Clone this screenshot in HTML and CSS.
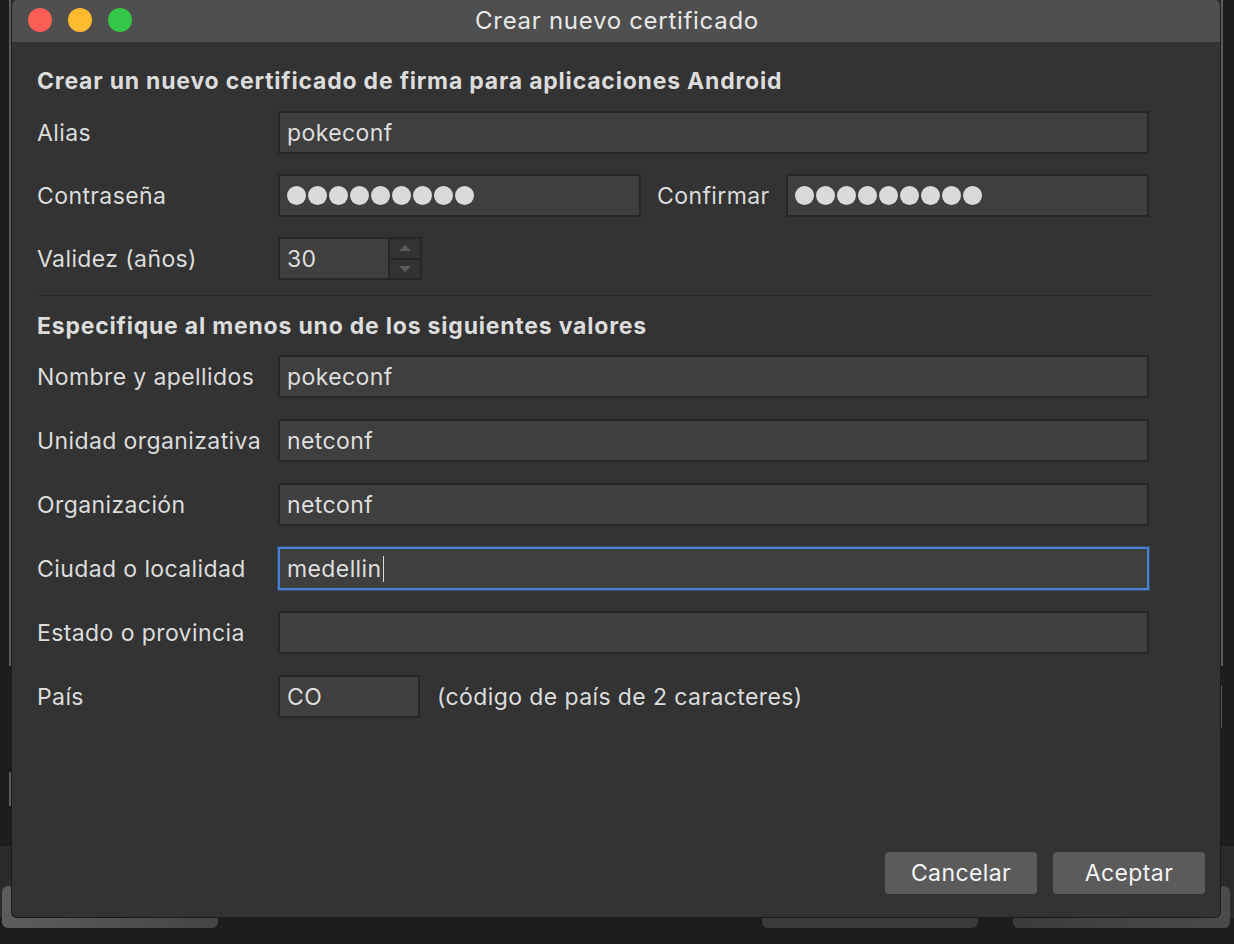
FILE: index.html
```html
<!DOCTYPE html>
<html lang="es">
<head>
<meta charset="utf-8">
<title>Crear nuevo certificado</title>
<link rel="stylesheet" href="styles.css">
</head>
<body>
<div class="desktop">
  <div class="bg-window"></div>
  <div class="bg-mark bg-mark-left"></div>
  <div class="bg-mark bg-mark-right"></div>
  <div class="bg-band"></div>
  <div class="bg-btn bg-btn-1"></div>
  <div class="bg-btn bg-btn-2"></div>
  <div class="bg-btn bg-btn-3"></div>

  <div class="dialog">
    <div class="titlebar">
      <div class="lights">
        <span class="light red"></span>
        <span class="light yellow"></span>
        <span class="light green"></span>
      </div>
      <div class="title">Crear nuevo certificado</div>
    </div>

    <div class="body">
      <h2 class="section">Crear un nuevo certificado de firma para aplicaciones Android</h2>
      <div class="form form-top">
        <div class="row">
          <label class="label">Alias</label>
          <div class="field">pokeconf</div>
        </div>
        <div class="row">
          <label class="label">Contraseña</label>
          <div class="pair">
            <div class="field dots"><span></span><span></span><span></span><span></span><span></span><span></span><span></span><span></span><span></span></div>
            <label class="label label-inline">Confirmar</label>
            <div class="field dots"><span></span><span></span><span></span><span></span><span></span><span></span><span></span><span></span><span></span></div>
          </div>
        </div>
        <div class="row">
          <label class="label">Validez (años)</label>
          <div class="spin">
            <div class="field spin-input">30</div>
            <div class="spin-buttons">
              <div class="spin-btn"><span class="arrow up"></span></div>
              <div class="spin-btn"><span class="arrow down"></span></div>
            </div>
          </div>
        </div>
      </div>

      <div class="separator"></div>

      <h2 class="section section-2">Especifique al menos uno de los siguientes valores</h2>
      <div class="form form-bottom">
        <div class="row">
          <label class="label">Nombre y apellidos</label>
          <div class="field">pokeconf</div>
        </div>
        <div class="row">
          <label class="label">Unidad organizativa</label>
          <div class="field">netconf</div>
        </div>
        <div class="row">
          <label class="label">Organización</label>
          <div class="field">netconf</div>
        </div>
        <div class="row">
          <label class="label">Ciudad o localidad</label>
          <div class="field focused">medellin<span class="caret"></span></div>
        </div>
        <div class="row">
          <label class="label">Estado o provincia</label>
          <div class="field"></div>
        </div>
        <div class="row">
          <label class="label">País</label>
          <div class="country">
            <div class="field field-short">CO</div>
            <span class="hint">(código de país de 2 caracteres)</span>
          </div>
        </div>
      </div>

      <div class="footer">
        <button class="btn">Cancelar</button>
        <button class="btn">Aceptar</button>
      </div>
    </div>
  </div>
</div>
</body>
</html>
```

FILE: styles.css
```css
* { box-sizing: border-box; }

html, body {
  margin: 0;
  padding: 0;
  width: 1234px;
  height: 944px;
  overflow: hidden;
  background: #1e1e1e;
  font-family: "Inter", "Noto Sans", "Liberation Sans", sans-serif;
}

.desktop {
  position: relative;
  width: 1234px;
  height: 944px;
  background: #1d1d1d;
}

/* backdrop windows behind the dialog */
.bg-window {
  position: absolute;
  left: 9px;
  top: 0;
  width: 1214px;
  height: 666px;
  border-left: 2px solid #5c5c5c;
  border-right: 2px solid #5c5c5c;
  background: #2a2a2a;
}
.bg-mark {
  position: absolute;
  width: 2px;
  background: #5a5a5a;
}
.bg-mark-left { left: 9px; top: 772px; height: 34px; }
.bg-mark-right { left: 1220px; top: 686px; height: 42px; }

.bg-band {
  position: absolute;
  left: 0;
  top: 846px;
  width: 1234px;
  height: 72px;
  background: #2b2b2b;
}
.bg-btn {
  position: absolute;
  top: 886px;
  height: 42px;
  border-radius: 6px;
  background: #444;
}
.bg-btn-1 { left: 2px; width: 216px; background: linear-gradient(90deg, #5c5c5c, #454545); }
.bg-btn-2 { left: 762px; width: 216px; background: #3b3b3b; }
.bg-btn-3 { left: 1013px; width: 217px; background: linear-gradient(90deg, #3b3b3b, #4b4b4b); }

/* dialog window */
.dialog {
  position: absolute;
  left: 11px;
  top: 0;
  width: 1210px;
  height: 918px;
  display: flex;
  flex-direction: column;
  background: #333333;
  border: 1px solid #1a1a1a;
  border-top: none;
  border-radius: 6px;
  overflow: hidden;
}

.titlebar {
  position: relative;
  height: 42px;
  flex: none;
  background: #4f4f4f;
  display: flex;
  align-items: center;
  justify-content: center;
}
.lights {
  position: absolute;
  left: 16px;
  top: 8px;
  display: flex;
  gap: 16px;
}
.light {
  width: 24px;
  height: 24px;
  border-radius: 50%;
  display: block;
}
.red { background: #fd5f57; }
.yellow { background: #fdbb2e; }
.green { background: #33c748; }
.title {
  color: #e8e8e8;
  font-size: 24px;
  line-height: 28px;
  letter-spacing: 0.7px;
  padding-left: 2px;
}

.body {
  flex: 1;
  display: flex;
  flex-direction: column;
  padding: 25px 15px 23px 25px;
}

.section {
  margin: 0;
  font-size: 23px;
  line-height: 28px;
  font-weight: 700;
  color: #dcdcdc;
  letter-spacing: 0.79px;
}

.form {
  display: flex;
  flex-direction: column;
  margin-right: 56px;
}
.form-top {
  margin-top: 16px;
  gap: 20px;
}
.form-bottom {
  margin-top: 15px;
  gap: 21px;
}

.row {
  display: grid;
  grid-template-columns: 241px 1fr;
  align-items: center;
}

.label {
  color: #dcdcdc;
  font-size: 23px;
  line-height: 28px;
  letter-spacing: 0.4px;
  white-space: nowrap;
}

.field {
  height: 43px;
  background: #3f3f3f;
  border: 2px solid #272727;
  padding: 0 7px;
  display: flex;
  align-items: center;
  color: #dedede;
  font-size: 23px;
  line-height: 28px;
  letter-spacing: 0.4px;
}

.pair {
  display: grid;
  grid-template-columns: 1fr 145px 1fr;
  align-items: center;
}
.label-inline {
  padding-left: 16px;
}

.dots {
  gap: 2px;
  padding-left: 7px;
}
.dots span {
  width: 19px;
  height: 19px;
  border-radius: 50%;
  background: #dadada;
  display: block;
}

.spin {
  display: flex;
  height: 43px;
  width: 144px;
}
.spin-input {
  width: 110px;
  height: 43px;
  border-right: none;
}
.spin-buttons {
  width: 34px;
  display: flex;
  flex-direction: column;
  border: 2px solid #272727;
  background: #333;
}
.spin-btn {
  flex: 1;
  display: flex;
  align-items: center;
  justify-content: center;
}
.spin-btn + .spin-btn {
  border-top: 2px solid #272727;
}
.arrow {
  width: 0;
  height: 0;
  border-left: 6px solid transparent;
  border-right: 6px solid transparent;
}
.arrow.up { border-bottom: 6px solid #5c5c5c; }
.arrow.down { border-top: 6px solid #5c5c5c; }

.separator {
  margin: 15px 53px 0 0;
  height: 2px;
  border-top: 1px solid #282828;
  border-bottom: 1px solid #383838;
}

.section-2 {
  margin-top: 15px;
}

.focused {
  border-color: #4a7fd6;
  box-shadow: 0 0 0 1px rgba(74, 127, 214, 0.35);
}
.caret {
  display: inline-block;
  width: 1px;
  height: 26px;
  background: #d8d8d8;
  margin-left: 1px;
}

.country {
  display: flex;
  align-items: center;
  gap: 17px;
}
.field-short {
  width: 142px;
}
.hint {
  color: #dcdcdc;
  font-size: 23px;
  line-height: 28px;
  letter-spacing: 0.4px;
}

.footer {
  margin-top: auto;
  display: flex;
  justify-content: flex-end;
  gap: 16px;
}
.btn {
  width: 152px;
  height: 42px;
  border: none;
  border-radius: 4px;
  background: #5b5b5b;
  color: #f4f4f4;
  font-family: inherit;
  font-size: 23px;
  line-height: 28px;
  letter-spacing: 0.4px;
  padding: 0;
}
```
